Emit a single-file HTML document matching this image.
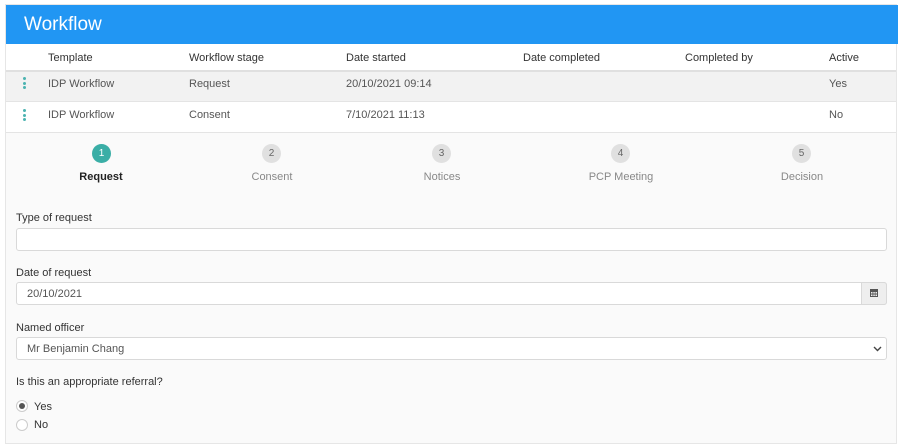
<!DOCTYPE html><html><head><style>
body{margin:0;width:904px;height:438px;overflow:hidden;background:#fff;font-family:"Liberation Sans",sans-serif;font-size:11px;color:#333}
.card{position:absolute;left:5px;top:4px;width:892px;height:440px;background:#fafafa;border:1px solid #e6e6e6;box-sizing:border-box}
.hdr{position:absolute;left:0;top:0;width:892px;height:39px;background:#2196f3;color:#fff;font-size:19px;line-height:39px;padding-left:18px;box-sizing:border-box}
.abs{position:absolute;white-space:nowrap}
.row{position:absolute;left:0;width:890px;border-top:1px solid #e4e4e4}
.dots{position:absolute;left:17px;width:3px}
.dots i{display:block;width:3px;height:3px;border-radius:50%;background:#4bb3b0;margin-bottom:1.5px}
.c{position:absolute;width:19px;height:19px;border-radius:50%;background:#e0e0e0;color:#666;font-size:10px;text-align:center;line-height:19px;top:139px}
.lbl{position:absolute;top:166px;width:120px;text-align:center;color:#888}
.in{position:absolute;left:10px;width:871px;height:23px;background:#fff;border:1px solid #d9d9d9;border-radius:3px;box-sizing:border-box;line-height:23px;color:#555;padding-left:10px}
.rad{position:absolute;left:10px;width:12px;height:12px;border-radius:50%;border:1px solid #ccc;box-sizing:border-box;background:#fff}
</style></head><body>
<div class="card">
<div class="hdr">Workflow</div>
<div class="row" style="top:39px;height:26px;background:#fff;border:none"></div>
<div class="abs" style="top:47px;left:42px">Template</div>
<div class="abs" style="top:47px;left:183px">Workflow stage</div>
<div class="abs" style="top:47px;left:340px">Date started</div>
<div class="abs" style="top:47px;left:517px">Date completed</div>
<div class="abs" style="top:47px;left:679px">Completed by</div>
<div class="abs" style="top:47px;left:823px">Active</div>
<div class="row" style="top:65px;height:31px;background:#f2f2f2;border-top:2px solid #e0e0e0"></div>
<div class="dots" style="top:72px"><i></i><i></i><i></i></div>
<div class="abs" style="top:73px;left:42px;color:#555">IDP Workflow</div>
<div class="abs" style="top:73px;left:183px;color:#555">Request</div>
<div class="abs" style="top:73px;left:340px;color:#555">20/10/2021 09:14</div>
<div class="abs" style="top:73px;left:823px;color:#555">Yes</div>
<div class="row" style="top:96px;height:31px;background:#fff"></div>
<div class="dots" style="top:104px"><i></i><i></i><i></i></div>
<div class="abs" style="top:104px;left:42px;color:#555">IDP Workflow</div>
<div class="abs" style="top:104px;left:183px;color:#555">Consent</div>
<div class="abs" style="top:104px;left:340px;color:#555">7/10/2021 11:13</div>
<div class="abs" style="top:104px;left:823px;color:#555">No</div>
<div class="row" style="top:127px;height:1px"></div>
<div class="c" style="left:86px;background:#3aaea6;color:#fff">1</div>
<div class="c" style="left:256px">2</div>
<div class="c" style="left:426px">3</div>
<div class="c" style="left:605px">4</div>
<div class="c" style="left:786px">5</div>
<div class="lbl" style="left:35px;color:#222;font-weight:bold">Request</div>
<div class="lbl" style="left:206px">Consent</div>
<div class="lbl" style="left:376px">Notices</div>
<div class="lbl" style="left:555px">PCP Meeting</div>
<div class="lbl" style="left:736px">Decision</div>
<div class="abs" style="top:207px;left:10px">Type of request</div>
<div class="in" style="top:223px"></div>
<div class="abs" style="top:262px;left:10px">Date of request</div>
<div class="in" style="top:277px">20/10/2021</div>
<div class="abs" style="left:855px;top:277px;width:26px;height:23px;background:#eee;border:1px solid #d9d9d9;box-sizing:border-box;border-radius:0 3px 3px 0">
<svg width="24" height="21" viewBox="0 0 24 21"><rect x="8" y="6" width="8" height="8" fill="#555"/><g fill="#eee"><rect x="9" y="9" width="1.5" height="1.5"/><rect x="11.3" y="9" width="1.5" height="1.5"/><rect x="13.5" y="9" width="1.5" height="1.5"/><rect x="9" y="11.5" width="1.5" height="1.5"/><rect x="11.3" y="11.5" width="1.5" height="1.5"/><rect x="13.5" y="11.5" width="1.5" height="1.5"/></g></svg></div>
<div class="abs" style="top:317px;left:10px">Named officer</div>
<div class="in" style="top:332px">Mr Benjamin Chang
<svg style="position:absolute;right:4px;top:8px" width="9" height="6" viewBox="0 0 9 6"><path d="M1 1l3.5 3.5L8 1" stroke="#444" stroke-width="1.4" fill="none"/></svg></div>
<div class="abs" style="top:371px;left:10px">Is this an appropriate referral?</div>
<div class="rad" style="top:395px"><div style="width:6px;height:6px;border-radius:50%;background:#555;margin:2px"></div></div>
<div class="abs" style="top:396px;left:28px">Yes</div>
<div class="rad" style="top:414px"></div>
<div class="abs" style="top:414px;left:28px">No</div>
</div>
</body></html>
